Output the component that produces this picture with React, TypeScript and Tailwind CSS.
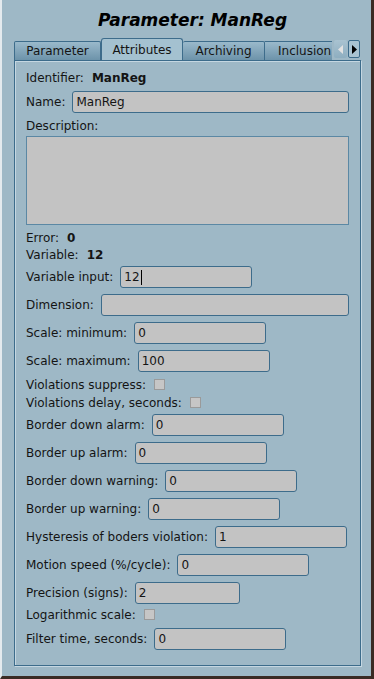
import React from "react";

const font = { fontFamily: "'DejaVu Sans', 'Liberation Sans', sans-serif" };

function Field({ label, value, width, mt, grow, caret }: { label: string; value?: string; width?: string; mt: string; grow?: boolean; caret?: boolean }) {
  return (
    <div className={`flex items-center gap-[7px] ${mt}`}>
      <span className="whitespace-nowrap">{label}</span>
      <div
        className={`h-[22px] rounded-[3px] border border-[#3d6c8b] bg-[#c3c3c3] pl-[3px] flex items-center ${grow ? "flex-1" : width}`}
      >
        {value}
        {caret && <span className="inline-block w-px h-[15px] bg-black ml-px" />}
      </div>
    </div>
  );
}

function Check({ label, mt }: { label: string; mt: string }) {
  return (
    <div className={`flex items-center gap-[8px] h-[17px] ${mt}`}>
      <span className="whitespace-nowrap">{label}</span>
      <div className="w-[11px] h-[11px] border border-[#9a9a9a] bg-[#c6c6c6]" />
    </div>
  );
}

export default function App() {
  return (
    <div
      className="w-[374px] h-[679px] bg-[#9eb8c6] border-l-2 border-l-[#e4eaee] border-r-[3px] border-r-[#3a2b24] border-b-[3px] border-b-[#3a2b24] text-[12px] text-[#141414] overflow-hidden"
      style={font}
    >
      {/* Title */}
      <div className="h-[38px] flex items-center justify-center pt-[4px] pl-[12px]">
        <span className="text-[17px] font-bold italic text-black">Parameter: ManReg</span>
      </div>

      {/* Tabs */}
      <div className="flex items-end h-[22px] ml-[12px] w-[347px] relative">
        <div className="w-[87px] h-[19px] border border-[#3d6c8b] border-b-0 rounded-t-[2px] bg-gradient-to-b from-[#9ab9cb] to-[#6d93aa] flex items-center justify-center">
          Parameter
        </div>
        <div className="w-[82px] h-[22px] border border-[#3d6c8b] border-b-0 rounded-t-[3px] bg-[#a4c1d0] flex items-center justify-center">
          Attributes
        </div>
        <div className="w-[82px] h-[19px] border border-[#3d6c8b] border-b-0 border-l-0 rounded-t-[2px] bg-gradient-to-b from-[#9ab9cb] to-[#6d93aa] flex items-center justify-center">
          Archiving
        </div>
        <div className="w-[67px] h-[19px] border border-[#3d6c8b] border-b-0 border-l-0 border-r-0 bg-gradient-to-b from-[#9ab9cb] to-[#6d93aa] flex items-center pl-[13px] overflow-hidden whitespace-nowrap">
          Inclusion
        </div>
        <div className="absolute right-[14px] top-[2px] w-[13px] h-[18px] rounded-[2px] bg-gradient-to-b from-[#a9c3d1] to-[#8eaec0] flex items-center justify-center">
          <svg width="5" height="9" viewBox="0 0 5 9"><path d="M5 0 L0 4.5 L5 9 Z" fill="#e2e2e2" /></svg>
        </div>
        <div className="absolute right-[1px] top-[2px] w-[12px] h-[18px] rounded-[2px] border border-[#3d6c8b] bg-[#a9c3d1] flex items-center justify-center">
          <svg width="5" height="9" viewBox="0 0 5 9"><path d="M0 0 L5 4.5 L0 9 Z" fill="#000" /></svg>
        </div>
      </div>

      {/* Panel */}
      <div className="ml-[12px] w-[347px] h-[606px] border border-[#3d6c8b] shadow-[inset_1px_1px_0_#c5d7e1,1px_1px_0_#c5d7e1] px-[11px] pt-[8px] flex flex-col">
        <div className="h-[17px] flex items-center gap-[8px]">
          <span>Identifier:</span>
          <span className="font-bold">ManReg</span>
        </div>
        <Field label="Name:" value="ManReg" grow mt="mt-[5px]" />
        <div className="h-[17px] mt-[4px] flex items-center">Description:</div>
        <div className="h-[89px] mt-[2px] border border-[#5b88a4] bg-[#c3c3c3]" />
        <div className="h-[17px] mt-[4px] flex items-center gap-[8px]">
          <span>Error:</span>
          <span className="font-bold">0</span>
        </div>
        <div className="h-[17px] flex items-center gap-[8px]">
          <span>Variable:</span>
          <span className="font-bold">12</span>
        </div>
        <Field label="Variable input:" value="12" width="w-[132px]" caret mt="mt-[3px]" />
        <Field label="Dimension:" grow mt="mt-[6px]" />
        <Field label="Scale: minimum:" value="0" width="w-[132px]" mt="mt-[6px]" />
        <Field label="Scale: maximum:" value="100" width="w-[132px]" mt="mt-[6px]" />
        <Check label="Violations suppress:" mt="mt-[4px]" />
        <Check label="Violations delay, seconds:" mt="mt-px" />
        <Field label="Border down alarm:" value="0" width="w-[132px]" mt="mt-[3px]" />
        <Field label="Border up alarm:" value="0" width="w-[132px]" mt="mt-[6px]" />
        <Field label="Border down warning:" value="0" width="w-[132px]" mt="mt-[6px]" />
        <Field label="Border up warning:" value="0" width="w-[132px]" mt="mt-[6px]" />
        <Field label="Hysteresis of boders violation:" value="1" width="w-[132px]" mt="mt-[6px]" />
        <Field label="Motion speed (%/cycle):" value="0" width="w-[132px]" mt="mt-[6px]" />
        <Field label="Precision (signs):" value="2" width="w-[105px]" mt="mt-[6px]" />
        <Check label="Logarithmic scale:" mt="mt-[2px]" />
        <Field label="Filter time, seconds:" value="0" width="w-[132px]" mt="mt-[5px]" />
      </div>
    </div>
  );
}
